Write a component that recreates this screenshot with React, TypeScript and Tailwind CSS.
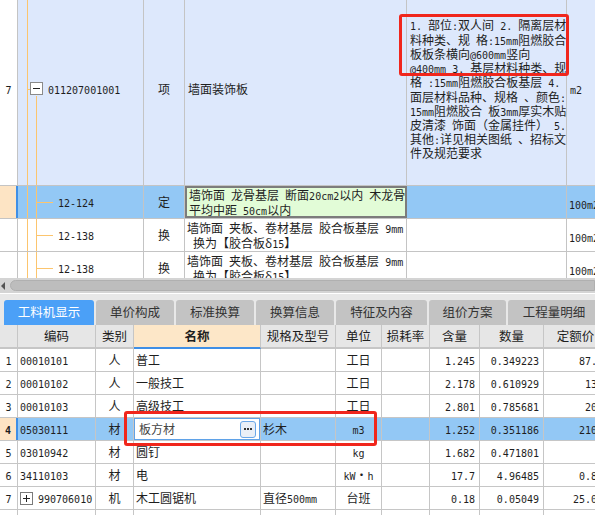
import React from 'react'

const desc = [
  '1. 部位:双人间 2. 隔离层材',
  '料种类、规 格:15mm阻燃胶合',
  '板板条横向@600mm竖向',
  '@400mm 3. 基层材料种类、规',
  '格 :15mm阻燃胶合板基层 4.',
  '面层材料品种、规格 、颜色:',
  '15mm阻燃胶合 板3mm厚实木贴',
  '皮清漆 饰面（金属挂件） 5.',
  '其他:详见相关图纸 、招标文',
  '件及规范要求',
]

const subRows = [
  { code: '12-124', type: '定', name: ['墙饰面 龙骨基层 断面20cm2以内 木龙骨', '平均中距 50cm以内'], sel: true },
  { code: '12-138', type: '换', name: ['墙饰面 夹板、卷材基层 胶合板基层 9mm', ' 换为【胶合板δ15】'], sel: false },
  { code: '12-138', type: '换', name: ['墙饰面 夹板、卷材基层 胶合板基层 9mm', ' 换为【胶合板δ15】'], sel: false },
]

const tabs = [
  { label: '工料机显示', w: 'w-[90px]' },
  { label: '单价构成', w: 'w-[78px]' },
  { label: '标准换算', w: 'w-[78px]' },
  { label: '换算信息', w: 'w-[78px]' },
  { label: '特征及内容', w: 'w-[91px]' },
  { label: '组价方案', w: 'w-[77px]' },
  { label: '工程量明细', w: 'w-[92px]' },
]

// column widths of the lower grid
const cols = ['w-[18px]', 'w-[78px]', 'w-[38px]', 'w-[127px]', 'w-[75px]', 'w-[46px]', 'w-[48px]', 'w-[50px]', 'w-[64px]', 'w-[64px]']
const heads = ['', '编码', '类别', '名称', '规格及型号', '单位', '损耗率', '含量', '数量', '定额价']

const items = [
  ['1', '00010101', '人', '普工', '', '工日', '', '1.245', '0.349223', '87.1'],
  ['2', '00010102', '人', '一般技工', '', '工日', '', '2.178', '0.610929', '134'],
  ['3', '00010103', '人', '高级技工', '', '工日', '', '2.801', '0.785681', '201'],
  ['4', '05030111', '材', '板方材', '杉木', 'm3', '', '1.252', '0.351186', '2100'],
  ['5', '03010942', '材', '圆钉', '', 'kg', '', '1.682', '0.471801', '7'],
  ['6', '34110103', '材', '电', '', 'kW·h', '', '17.7', '4.96485', '0.89'],
  ['7', '990706010', '机', '木工圆锯机', '直径500mm', '台班', '', '0.18', '0.05049', '25.08'],
]

// half-width runs are drawn in a monospace face, like the grid's old bitmap font
function T({ s }: { s: string }) {
  const parts = s.split(/([\x20-\x7e]+)/)
  return (
    <span className="whitespace-pre">
      {parts.map((p, k) =>
        /^[\x20-\x7e]+$/.test(p) ? (
          <span key={k} className="font-['DejaVu_Sans_Mono',monospace] text-[10px] leading-[10px]">{p}</span>
        ) : (
          p
        )
      )}
    </span>
  )
}

function ItemCell({ i, v, sel, row }: { i: number; v: string; sel: boolean; row: string[] }) {
  const base = `${cols[i]} shrink-0 h-full border-r border-[#c6c6c6] flex items-center whitespace-nowrap overflow-hidden`
  if (i === 0) {
    return sel ? (
      <div className={`${base} justify-center bg-[#fde4c4] border-r-2 border-r-[#3f8fe6] font-bold`}><T s={v} /></div>
    ) : (
      <div className={`${base} justify-center bg-white`}><T s={v} /></div>
    )
  }
  if (i === 1 && row[0] === '7') {
    return (
      <div className={`${base} pl-[2px]`}>
        <span className="w-[13px] h-[13px] shrink-0 border border-[#7a7a7a] bg-white flex items-center justify-center">
          <span className="relative w-[7px] h-[7px] flex items-center justify-center">
            <span className="absolute w-[7px] h-px bg-[#222]" />
            <span className="absolute w-px h-[7px] bg-[#222]" />
          </span>
        </span>
        <span className="ml-[5px]"><T s={v} /></span>
      </div>
    )
  }
  if (i === 3 && sel) {
    return (
      <div className={base}>
        <div className="w-full h-full bg-white border border-[#5fa2e8] flex items-center justify-between pl-[4px] pr-[3px] text-[#444]">
          <span>{v}</span>
          <span className="w-[16px] h-[17px] rounded-[3px] border border-[#6aa7e8] bg-[#e9eff7] flex items-center justify-center gap-[1px]">
            <span className="w-[2px] h-[2px] bg-[#333]" />
            <span className="w-[2px] h-[2px] bg-[#333]" />
            <span className="w-[2px] h-[2px] bg-[#333]" />
          </span>
        </div>
      </div>
    )
  }
  if (i === 2 || i === 5) return <div className={`${base} justify-center`}><T s={v} /></div>
  if (i >= 7) return <div className={`${base} justify-end pr-[4px]`}><T s={v} /></div>
  return <div className={`${base} pl-[2px]`}><T s={v} /></div>
}

export default function App() {
  return (
    <div className="relative w-[595px] h-[515px] overflow-hidden bg-white text-[12px] text-[#1e1e1e] font-['Noto_Sans_CJK_SC',sans-serif]">
      {/* upper grid */}
      <div className="h-[278px] overflow-hidden flex flex-col">
        <div className="flex h-[186px] shrink-0 border-b border-[#c4c4c4] bg-[#dde8fc]">
          <div className="w-[18px] shrink-0 bg-white border-r border-[#c4c4c4] flex items-center justify-center pb-[8px]"><T s="7" /></div>
          <div className="relative w-[126px] shrink-0 border-r border-[#c4c4c4] flex items-center pl-[12px] pb-[8px]">
            <div className="absolute left-[9px] top-0 bottom-0 w-px bg-[#fcc56e]" />
            <div className="absolute left-[9px] top-[89px] w-[3px] h-px bg-[#fcc56e]" />
            <div className="absolute left-[18px] top-[96px] bottom-0 w-px bg-[#fcc56e]" />
            <span className="w-[13px] h-[13px] border border-[#8a8a8a] bg-white flex items-center justify-center">
              <span className="w-[7px] h-px bg-[#222]" />
            </span>
            <span className="ml-[5px]"><T s="011207001001" /></span>
          </div>
          <div className="w-[41px] shrink-0 border-r border-[#c4c4c4] flex items-center justify-center pb-[8px]">项</div>
          <div className="w-[222px] shrink-0 border-r border-[#c4c4c4] flex items-center pl-[3px] pb-[8px]">墙面装饰板</div>
          <div className="w-[160px] shrink-0 border-r border-[#c4c4c4] flex flex-col justify-center pl-[3px] pb-[6px] leading-[14.2px]">
            {desc.map((l, k) => (
              <div key={k} className="whitespace-pre"><T s={l} /></div>
            ))}
          </div>
          <div className="flex-1 flex items-center pl-[3px] pb-[8px]"><T s="m2" /></div>
        </div>
        {subRows.map((r, k) => (
          <div key={k} className={`flex h-[33px] shrink-0 border-b border-[#c4c4c4] ${r.sel ? 'bg-[#93c8f5]' : 'bg-white'}`}>
            <div className={`w-[18px] shrink-0 border-r ${r.sel ? 'bg-[#fde4c4] border-r-2 border-r-[#3f8fe6]' : 'bg-white border-[#c4c4c4]'}`} />
            <div className="relative w-[126px] shrink-0 border-r border-[#c4c4c4] flex items-center pl-[40px]">
              <div className="absolute left-[9px] top-0 bottom-0 w-px bg-[#fcc56e]" />
              <div className="absolute left-[18px] top-0 bottom-0 w-px bg-[#fcc56e]" />
              <div className="absolute left-[18px] top-1/2 w-[17px] h-px bg-[#fcc56e]" />
              <T s={r.code} />
            </div>
            <div className="w-[41px] shrink-0 border-r border-[#c4c4c4] flex items-center justify-center">{r.type}</div>
            <div className={`w-[222px] shrink-0 flex flex-col justify-center pl-[2px] leading-[15px] overflow-hidden ${r.sel ? 'bg-[#e2fcd7] border-2 border-[#7c7c7c]' : 'border-r border-[#c4c4c4]'}`}>
              {r.name.map((l, j) => (
                <div key={j} className="whitespace-pre"><T s={l} /></div>
              ))}
            </div>
            <div className="w-[160px] shrink-0 border-r border-[#c4c4c4]" />
            <div className="flex-1 flex items-center pl-[2px] pt-[3px] whitespace-nowrap"><T s="100m2" /></div>
          </div>
        ))}
      </div>

      {/* horizontal scrollbar */}
      <div className="h-[15px] bg-[#d4d4d4] flex items-center">
        <span className="ml-[1px] w-0 h-0 border-y-[4px] border-y-transparent border-r-[4px] border-r-[#555]" />
        <div className="ml-[5px] flex-1 h-[11px] rounded-l-full bg-[#bdbdbd] border border-[#b0b0b0]" />
      </div>

      {/* tab strip */}
      <div className="h-[32px] bg-[#e8e8e8] border-t border-white flex items-end gap-[2px] pl-[4px]">
        {tabs.map((t, k) => (
          <div
            key={k}
            className={`${t.w} shrink-0 h-[25px] rounded-t-[3px] flex items-center justify-center text-[12.5px] ${k === 0 ? 'bg-[#4ba0f7] text-white' : 'bg-[#c3c3c3] text-[#333]'}`}
          >
            {t.label}
          </div>
        ))}
      </div>

      {/* lower grid header */}
      <div className="flex h-[24px] bg-[#e6e6e6] text-[12.5px]">
        {heads.map((h, i) => (
          <div
            key={i}
            className={`${cols[i]} shrink-0 h-full border-r border-[#c6c6c6] border-b-2 flex items-center justify-center whitespace-nowrap ${i === 3 ? 'bg-[#fde7c8] border-b-[#3f8fe6] font-bold' : 'border-b-[#c6c6c6]'}`}
          >
            {h}
          </div>
        ))}
      </div>

      {/* lower grid rows */}
      <div>
        {items.map((row, r) => {
          const sel = row[0] === '4'
          return (
            <div key={r} className={`flex h-[23px] border-b border-[#c6c6c6] ${sel ? 'bg-[#93c8f5]' : 'bg-white'}`}>
              {row.map((v, i) => (
                <ItemCell key={i} i={i} v={v} sel={sel} row={row} />
              ))}
            </div>
          )
        })}
        <div className="flex h-[23px]">
          {cols.map((c, i) => (
            <div key={i} className={`${c} shrink-0 h-full border-r border-[#c6c6c6]`} />
          ))}
        </div>
      </div>

      {/* red annotation marks */}
      <div className="absolute left-[399px] top-[14px] w-[170px] h-[62px] border-[3px] border-[#f0261c] rounded-[3px]" />
      <div className="absolute left-[124px] top-[411px] w-[253px] h-[35px] border-[3px] border-[#f0261c] rounded-[3px]" />
    </div>
  )
}
